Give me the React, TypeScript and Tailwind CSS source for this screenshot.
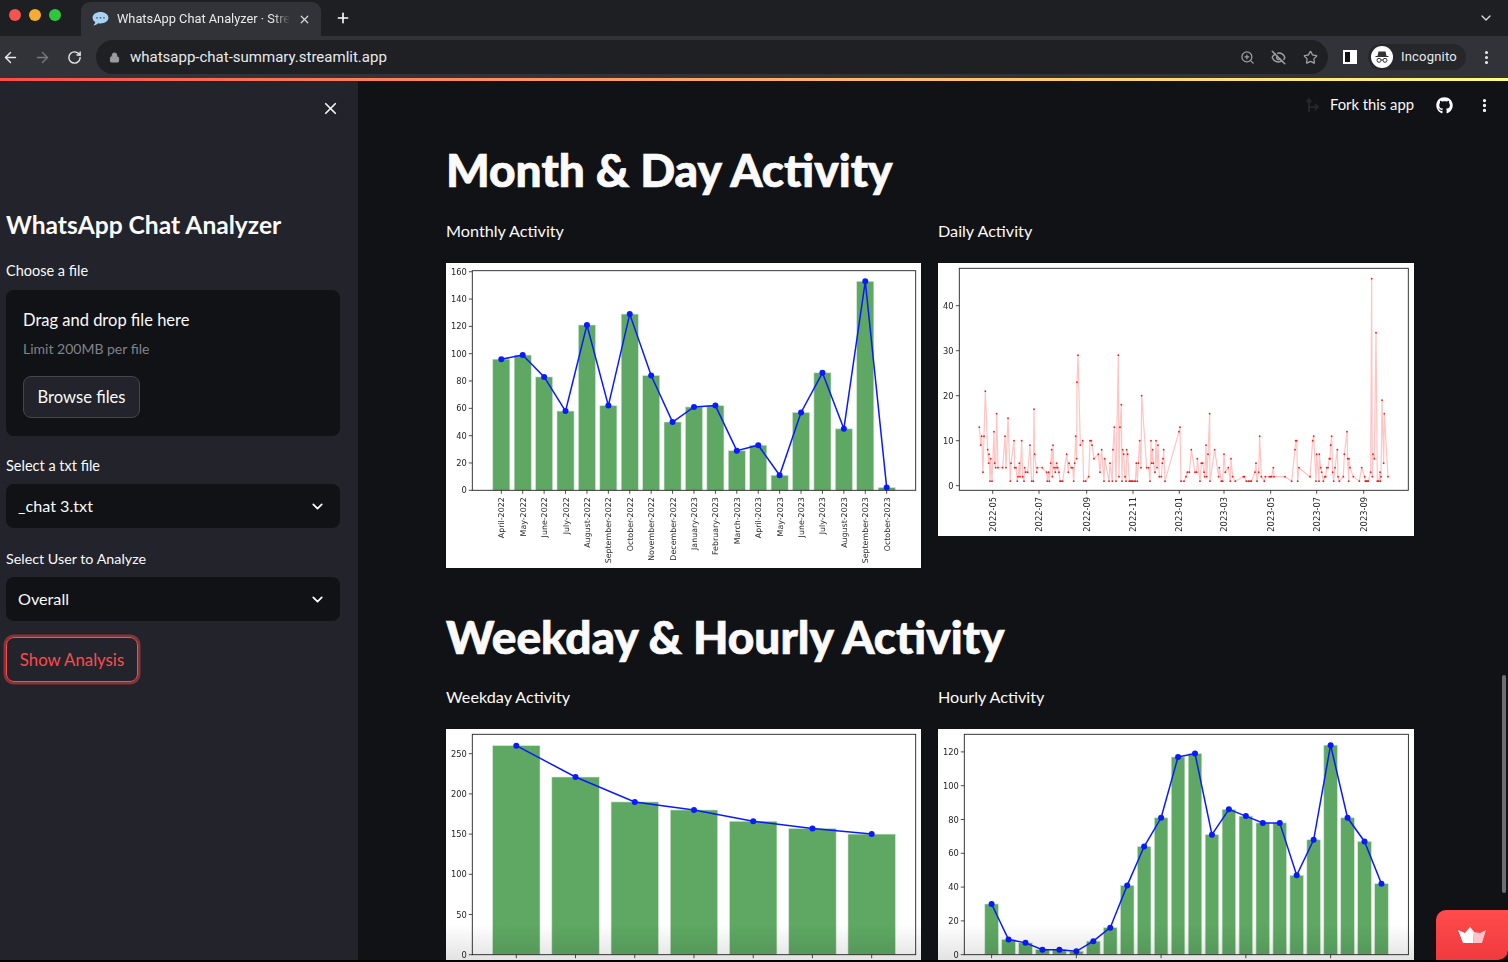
import { ArrowLeft, ArrowRight, ChevronDown, EllipsisVertical, EyeOff, Lock, Plus, RotateCw, Star, X, ZoomIn } from 'lucide-react';
import { FaGithub } from 'react-icons/fa';

const months = [
  'April-2022', 'May-2022', 'June-2022', 'July-2022', 'August-2022', 'September-2022', 'October-2022',
  'November-2022', 'December-2022', 'January-2023', 'February-2023', 'March-2023', 'April-2023', 'May-2023',
  'June-2023', 'July-2023', 'August-2023', 'September-2023', 'October-2023',
];
const monthly = [96, 99, 83, 58, 121, 62, 129, 84, 50, 61, 62, 29, 33, 11, 57, 86, 45, 153, 2];
const weekday = [260, 221, 190, 180, 166, 157, 150];
const hourly = [30, 9, 7, 3, 3, 2, 8, 16, 41, 64, 81, 117, 119, 71, 86, 82, 78, 78, 47, 68, 124, 81, 67, 42];

// x in px of the 3x crop, then the value
const daily: [number, number][] = [
  [148, 13], [152, 9], [155, 11], [159, 3], [162, 11], [166, 21], [173, 8], [176, 5], [177, 7], [180, 1], [182, 6],
  [186, 1], [192, 12], [194, 5], [197, 4], [200, 16], [204, 4], [218, 4], [225, 11], [228, 4], [234, 15], [241, 1],
  [243, 5], [252, 10], [254, 4], [258, 4], [262, 1], [264, 2], [268, 5], [270, 2], [275, 10], [278, 2], [282, 1],
  [284, 4], [287, 3], [293, 3], [300, 9], [305, 1], [310, 1], [312, 17], [314, 7], [320, 3], [322, 4], [337, 4],
  [350, 3], [352, 1], [356, 3], [358, 1], [362, 5], [365, 8], [367, 2], [369, 9], [372, 4], [376, 3], [378, 4],
  [380, 5], [383, 4], [387, 3], [390, 1], [393, 1], [398, 1], [410, 7], [415, 3], [417, 5], [424, 4], [428, 4],
  [431, 1], [434, 5], [437, 11], [440, 6], [441, 23], [444, 29], [451, 9], [458, 10], [461, 1], [467, 1], [476, 2],
  [480, 10], [484, 10], [486, 9], [492, 6], [505, 7], [510, 3], [515, 8], [522, 1], [524, 6], [537, 1], [540, 5],
  [547, 1], [549, 8], [553, 13], [558, 1], [565, 29], [567, 2], [570, 13], [574, 18], [576, 1], [578, 8], [581, 7],
  [585, 2], [588, 1], [590, 8], [593, 7], [598, 1], [600, 1], [604, 1], [607, 1], [612, 1], [616, 1], [619, 5],
  [622, 1], [625, 5], [629, 10], [633, 4], [635, 20], [650, 4], [656, 4], [660, 1], [663, 10], [665, 5], [668, 8],
  [670, 5], [675, 3], [678, 10], [681, 4], [684, 9], [688, 2], [694, 2], [697, 5], [699, 6], [701, 8], [705, 1],
  [747, 12], [750, 13], [753, 1], [762, 1], [768, 2], [772, 3], [778, 3], [784, 8], [795, 3], [800, 3], [802, 6],
  [810, 1], [814, 5], [818, 5], [822, 3], [824, 2], [828, 9], [830, 2], [834, 7], [839, 16], [840, 1], [854, 8],
  [866, 2], [868, 4], [874, 1], [878, 1], [882, 7], [886, 3], [895, 4], [901, 1], [903, 6], [908, 2], [916, 1],
  [940, 2], [943, 2], [949, 1], [955, 1], [960, 1], [964, 1], [975, 3], [978, 5], [981, 1], [986, 3], [989, 11],
  [994, 2], [1003, 1], [1006, 2], [1018, 2], [1022, 2], [1025, 2], [1030, 4], [1032, 2], [1065, 2], [1085, 1],
  [1095, 8], [1097, 10], [1100, 10], [1103, 1], [1107, 4], [1140, 2], [1148, 10], [1151, 11], [1158, 1], [1160, 7],
  [1167, 1], [1168, 7], [1172, 4], [1175, 3], [1180, 1], [1184, 2], [1187, 2], [1190, 4], [1194, 4], [1198, 6],
  [1200, 6], [1202, 9], [1205, 11], [1208, 3], [1211, 1], [1215, 4], [1222, 8], [1224, 2], [1228, 1], [1240, 2],
  [1243, 7], [1251, 12], [1253, 6], [1256, 1], [1257, 6], [1260, 4], [1270, 2], [1288, 1], [1295, 4], [1304, 2],
  [1306, 1], [1309, 1], [1312, 1], [1315, 1], [1322, 3], [1325, 46], [1327, 2], [1329, 7], [1333, 6], [1338, 34],
  [1342, 1], [1346, 1], [1350, 3], [1351, 1], [1353, 2], [1356, 19], [1361, 5], [1363, 16], [1374, 2],
];

const dailyTicks: [string, number][] = [
  ['2022-05', 54.7], ['2022-07', 101], ['2022-09', 148.7], ['2022-11', 195], ['2023-01', 241.3],
  ['2023-03', 286], ['2023-05', 332.7], ['2023-07', 378.7], ['2023-09', 425.7],
];

type BarChartProps = {
  id: string;
  w: number;
  h: number;
  box: [number, number, number, number];
  scale: number;
  start: number;
  step: number;
  barW: number;
  values: number[];
  yTicks: number[];
  xTicks: number[];
  labels?: string[];
  fade?: boolean;
};

function BarChart({ id, w, h, box, scale, start, step, barW, values, yTicks, xTicks, labels, fade }: BarChartProps) {
  const [left, right, top, bottom] = box;
  const points = values.map((v, i) => `${start + i * step},${bottom - v * scale}`).join(' ');
  return (
    <svg width={w} height={h} viewBox={`0 0 ${w} ${h}`} className="block bg-white blur-[0.4px]">
      <defs>
        <linearGradient id={id} x1="0" y1="0" x2="0" y2="1">
          <stop offset="0" stopColor="#000" stopOpacity="0" />
          <stop offset="1" stopColor="#000" stopOpacity="0.11" />
        </linearGradient>
      </defs>
      {values.map((v, i) => (
        <rect
          key={i}
          x={start + i * step - barW / 2}
          y={bottom - v * scale}
          width={barW}
          height={v * scale}
          fill="#5ea863"
          stroke="#d3e6d4"
          strokeWidth="0.6"
        />
      ))}
      <rect x={left} y={top} width={right - left} height={bottom - top} fill="none" stroke="#222" strokeWidth="0.9" />
      {yTicks.map((t) => (
        <g key={t}>
          <line x1={left - 3.5} x2={left} y1={bottom - t * scale} y2={bottom - t * scale} stroke="#222" strokeWidth="0.8" />
          <text x={left - 5.5} y={bottom - t * scale + 3} textAnchor="end" fontSize="8.3" fill="#262626" fontFamily="'DejaVu Sans', sans-serif">
            {t}
          </text>
        </g>
      ))}
      {xTicks.map((i) => (
        <line key={i} x1={start + i * step} x2={start + i * step} y1={bottom} y2={bottom + 3.5} stroke="#222" strokeWidth="0.8" />
      ))}
      {labels?.map((l, i) => (
        <text
          key={l + i}
          textAnchor="end"
          fontSize="7.9"
          fill="#262626"
          fontFamily="'DejaVu Sans', sans-serif"
          transform={`translate(${start + i * step + 3},${bottom + 7}) rotate(-90)`}
        >
          {l}
        </text>
      ))}
      <polyline points={points} fill="none" stroke="#0a1aff" strokeWidth="1.5" />
      {values.map((v, i) => (
        <circle key={i} cx={start + i * step} cy={bottom - v * scale} r="3" fill="#0a1aff" />
      ))}
      {fade && <rect x="0" y={h - 36} width={w} height="36" fill={`url(#${id})`} />}
    </svg>
  );
}

function DailyChart() {
  const pts = daily.map(([x, v]) => [x / 3 - 8, 222.7 - v * 4.5]);
  return (
    <svg width="476" height="273" viewBox="0 0 476 273" className="block bg-white blur-[0.3px]">
      <rect x="21.3" y="5.3" width="449" height="222" fill="none" stroke="#222" strokeWidth="0.9" />
      {[0, 10, 20, 30, 40].map((t) => (
        <g key={t}>
          <line x1="17.8" x2="21.3" y1={222.7 - t * 4.5} y2={222.7 - t * 4.5} stroke="#222" strokeWidth="0.8" />
          <text x="15.5" y={225.7 - t * 4.5} textAnchor="end" fontSize="8.3" fill="#262626" fontFamily="'DejaVu Sans', sans-serif">
            {t}
          </text>
        </g>
      ))}
      {dailyTicks.map(([l, x]) => (
        <g key={l}>
          <line x1={x} x2={x} y1="227.3" y2="230.8" stroke="#222" strokeWidth="0.8" />
          <text
            textAnchor="end"
            fontSize="8.3"
            fill="#262626"
            fontFamily="'DejaVu Sans', sans-serif"
            transform={`translate(${x + 3},234) rotate(-90)`}
          >
            {l}
          </text>
        </g>
      ))}
      <polyline points={pts.map((p) => p.join(',')).join(' ')} fill="none" stroke="#ffc4c4" strokeWidth="1.2" />
      {pts.map(([x, y], i) => (
        <circle key={i} cx={x} cy={y} r="0.9" fill="#f01818" />
      ))}
    </svg>
  );
}

function Favicon() {
  return (
    <svg width="17" height="16" viewBox="0 0 17 16">
      <path d="M8.500 1C4 1 .6 3.400.6 6.700c0 1.800 1 3.300 2.600 4.300-.1 1.200-.8 2.400-1.700 3.400 1.800-.2 3.500-1.100 4.700-2.200.7.1 1.500.2 2.300.2 4.500 0 7.900-2.500 7.900-5.700S13 1 8.500 1z" fill="#a9d3f2" />
      <circle cx="5" cy="6.800" r="0.900" fill="#47688a" />
      <circle cx="8.500" cy="6.800" r="0.900" fill="#47688a" />
      <circle cx="12" cy="6.800" r="0.900" fill="#47688a" />
    </svg>
  );
}

function IncognitoIcon() {
  return (
    <div className="flex h-[22px] w-[22px] items-center justify-center rounded-full bg-white">
      <svg width="18" height="18" viewBox="0 0 18 18" fill="none">
        <path d="M2.500 8h13v1h-13zM5.500 3.500h7L13.500 8h-9z" fill="#333" />
        <circle cx="6" cy="12.300" r="2" stroke="#333" strokeWidth="1" />
        <circle cx="12" cy="12.300" r="2" stroke="#333" strokeWidth="1" />
        <path d="M8 12h2" stroke="#333" strokeWidth="1" />
      </svg>
    </div>
  );
}

function TabStrip() {
  return (
    <div className="flex h-9 shrink-0 items-end bg-[#1e1f22] pl-2 pr-[14px]">
      <div className="mb-[15px] flex gap-[8px] pl-[1px]">
        <span className="h-3 w-3 rounded-full bg-[#f4544f]" />
        <span className="h-3 w-3 rounded-full bg-[#f6ac33]" />
        <span className="h-3 w-3 rounded-full bg-[#2ec63f]" />
      </div>
      <div className="ml-[20px] flex h-[34px] w-[240px] items-center rounded-t-[9px] bg-[#323338] pl-[11px] pr-[10px]">
        <Favicon />
        <span className="ml-[8px] whitespace-nowrap font-['Roboto',sans-serif] text-[12.800px] text-[#e8eaed] [mask-image:linear-gradient(90deg,#000_90%,transparent)]">
          WhatsApp Chat Analyzer · Stre
        </span>
        <X className="ml-auto text-[#d5d6d9]" size={13} strokeWidth={2.2} />
      </div>
      <Plus className="mb-[10px] ml-[14px] text-white" size={16} strokeWidth={2.4} />
      <ChevronDown className="mb-[10px] ml-auto text-[#dcdde0]" size={16} strokeWidth={2} />
    </div>
  );
}

function Toolbar() {
  return (
    <div className="flex h-[42px] shrink-0 items-center bg-[#323338] pl-[2px] pr-[13px]">
      <ArrowLeft className="text-[#e8eaed]" size={17} strokeWidth={2} />
      <ArrowRight className="ml-[15px] text-[#77787c]" size={17} strokeWidth={2} />
      <RotateCw className="ml-[16px] text-[#e8eaed]" size={15} strokeWidth={2.2} />
      <div className="ml-[14px] flex h-[34px] w-[1232px] shrink-0 items-center rounded-full bg-[#1f2023] pl-[13px] pr-[10px]">
        <Lock className="text-[#9a9b9f]" size={11} fill="#9a9b9f" strokeWidth={2} />
        <span className="ml-[10px] font-['Roboto',sans-serif] text-[15px] text-[#e8eaed]">whatsapp-chat-summary.streamlit.app</span>
        <ZoomIn className="ml-auto text-[#a0a1a5]" size={15} strokeWidth={2} />
        <EyeOff className="ml-[16px] text-[#a0a1a5]" size={15} strokeWidth={2.4} />
        <Star className="ml-[17px] text-[#a0a1a5]" size={15} strokeWidth={2} />
      </div>
      <div className="ml-[15px] flex h-[14px] w-[14px] shrink-0 justify-end border-[2px] border-white bg-[#111]">
        <span className="h-full w-[5px] bg-white" />
      </div>
      <div className="ml-[11px] flex h-[26px] w-[98px] shrink-0 items-center rounded-full bg-[#26272b] pl-[3px]">
        <IncognitoIcon />
        <span className="ml-[8px] font-['Roboto',sans-serif] text-[13px] tracking-[0.2px] text-[#e8eaed]">Incognito</span>
      </div>
      <EllipsisVertical className="ml-[12px] shrink-0 text-[#e8eaed]" size={17} strokeWidth={2.4} />
    </div>
  );
}

function SelectBox({ value }: { value: string }) {
  return (
    <div className="flex h-11 items-center justify-between rounded-lg bg-[#111216] pl-3 pr-[14px] text-[16.200px] text-[#fafafa]">
      {value}
      <ChevronDown className="text-white" size={17} strokeWidth={2.4} />
    </div>
  );
}

function Sidebar() {
  return (
    <aside className="flex w-[358px] shrink-0 flex-col bg-[#22232b] pl-[6px] pr-[18px] text-[#fafafa]">
      <div className="flex h-[54px] items-center justify-end">
        <X size={19} strokeWidth={2.2} className="text-[#f2f2f2]" />
      </div>
      <h2 className="mt-[73px] text-[24.600px] font-bold leading-[34px]">WhatsApp Chat Analyzer</h2>
      <label className="mt-[19px] text-[14.500px] leading-5">Choose a file</label>
      <div className="mt-[9px] h-[146px] rounded-lg bg-[#111216] pl-[17px] pr-[18px] pt-[18px]">
        <p className="text-[16.500px] leading-6">Drag and drop file here</p>
        <p className="mt-[7px] text-[14px] leading-5 text-[#81828a]">Limit 200MB per file</p>
        <button className="mt-[17px] h-[42px] w-[117px] rounded-lg border border-[#44454d] bg-[#22232b] text-[16.600px]">Browse files</button>
      </div>
      <label className="mt-[20px] text-[14.500px] leading-5">Select a txt file</label>
      <div className="mt-2">
        <SelectBox value="_chat 3.txt" />
      </div>
      <label className="mt-[21px] text-[14.300px] leading-5">Select User to Analyze</label>
      <div className="mt-2">
        <SelectBox value="Overall" />
      </div>
      <button className="mt-[16px] h-[45px] w-[132px] rounded-lg border-[1.5px] border-[#ff4b4b] text-[16.800px] text-[#ff4b4b] shadow-[0_0_0_2.500px_rgba(255,75,75,0.45)]">
        Show Analysis
      </button>
    </aside>
  );
}

function Main() {
  return (
    <main className="min-w-0 flex-1 overflow-hidden bg-[#111216] pl-[88px] text-[#fafafa]">
      <div className="flex h-[48px] items-center justify-end pr-[15px]">
        <svg width="16" height="16" viewBox="0 0 16 16" fill="none" stroke="#24262d" strokeWidth="2">
          <path d="M4 15V2M1.500 5 4 2l2.500 3M4 10h9M10 7l3 3-3 3" />
        </svg>
        <span className="mb-[2px] ml-[9px] text-[14.800px]">Fork this app</span>
        <FaGithub className="ml-[22px] text-white" size={17} />
        <EllipsisVertical className="ml-[23px] text-white" size={17} strokeWidth={2.6} />
      </div>
      <h1 className="mt-[11px] text-[46px] font-black leading-[60px] [-webkit-text-stroke:0.7px_#fafafa]">Month &amp; Day Activity</h1>
      <div className="mt-[20px] grid w-[968px] grid-cols-[475px_476px] gap-x-[17px]">
        <div>
          <p className="text-[16.200px] leading-[22px]">Monthly Activity</p>
          <div className="mt-[21px]">
            <BarChart
              id="m"
              w={475}
              h={305}
              box={[26.3, 469.7, 7.7, 227.3]}
              scale={1.366}
              start={55.3}
              step={21.41}
              barW={17.1}
              values={monthly}
              yTicks={[0, 20, 40, 60, 80, 100, 120, 140, 160]}
              xTicks={monthly.map((_, i) => i)}
              labels={months}
            />
          </div>
        </div>
        <div>
          <p className="text-[16.200px] leading-[22px]">Daily Activity</p>
          <div className="mt-[21px]">
            <DailyChart />
          </div>
        </div>
      </div>
      <h1 className="mt-[39px] text-[46px] font-black leading-[60px] [-webkit-text-stroke:0.7px_#fafafa]">Weekday &amp; Hourly Activity</h1>
      <div className="mt-[19px] grid w-[968px] grid-cols-[475px_476px] gap-x-[17px]">
        <div>
          <p className="text-[16.200px] leading-[22px]">Weekday Activity</p>
          <div className="mt-[21px]">
            <BarChart
              id="w"
              w={475}
              h={231}
              box={[26.3, 469.7, 5.3, 225.7]}
              scale={0.804}
              start={70.3}
              step={59.23}
              barW={47.4}
              values={weekday}
              yTicks={[0, 50, 100, 150, 200, 250]}
              xTicks={weekday.map((_, i) => i)}
              fade
            />
          </div>
        </div>
        <div>
          <p className="text-[16.200px] leading-[22px]">Hourly Activity</p>
          <div className="mt-[21px]">
            <BarChart
              id="h"
              w={476}
              h={231}
              box={[26.3, 470.4, 5.3, 225.7]}
              scale={1.69}
              start={53.6}
              step={16.95}
              barW={13.6}
              values={hourly}
              yTicks={[0, 20, 40, 60, 80, 100, 120]}
              xTicks={[0, 5, 10, 15, 20]}
              fade
            />
          </div>
        </div>
      </div>
    </main>
  );
}

export default function App() {
  return (
    <div className="relative flex h-[962px] w-[1508px] flex-col overflow-hidden bg-black font-['Lato','Noto_Sans',sans-serif]">
      <TabStrip />
      <Toolbar />
      <div className="h-[3px] shrink-0 bg-gradient-to-r from-[#ff4b4b] to-[#fffd80]" />
      <div className="flex min-h-0 flex-1">
        <Sidebar />
        <Main />
      </div>
      <div className="h-[2px] shrink-0 bg-black" />
      {/* scrollbar thumb and the hosted-app badge sit over the page */}
      <div className="absolute right-[2px] top-[675px] h-[218px] w-[4px] rounded-full bg-[#6d6e72]" />
      <div className="absolute bottom-[2px] right-0 flex h-[50px] w-[72px] items-center justify-center rounded-br-[10px] rounded-tl-[10px] bg-gradient-to-b from-[#ff4b4b] to-[#f03a3f]">
        <svg width="28" height="16" viewBox="0 0 28 16">
          <path d="M0 3l7 3 5-6 4 5-1 11H5z" fill="#fff" />
          <path d="M16 5l-1 11h9l4-13-6 3z" fill="#f9c5cb" />
          <path d="M12 0l4 5-2 2z" fill="#fde3e6" />
        </svg>
      </div>
    </div>
  );
}
